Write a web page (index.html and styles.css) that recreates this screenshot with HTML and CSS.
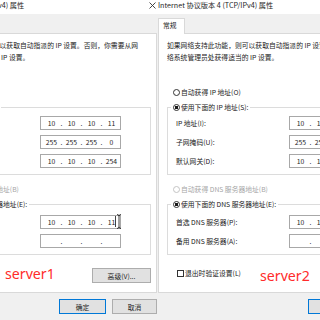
FILE: index.html
```html
<!DOCTYPE html>
<html lang="zh-CN">
<head>
<meta charset="utf-8">
<title>TCP/IPv4 属性</title>
<link rel="stylesheet" href="styles.css">
</head>
<body>
<div class="screen">
  <div class="pane pane-left">
    <div class="dialog dialog-left">
      <div class="titlebar"><span class="title">Internet 协议版本 4 (TCP/IPv4) 属性</span><svg class="close" width="7" height="7" viewBox="0 0 7 7"><path d="M0.5 0.5L6.5 6.5M6.5 0.5L0.5 6.5" stroke="#333" stroke-width="0.9" fill="none"/></svg></div>
      <div class="tabstrip"><div class="tab">常规</div></div>
      <div class="page">
        <p class="desc">如果网络支持此功能，则可以获取自动指派的 IP 设置。否则，你需要从网<br>络系统管理员处获得适当的 IP 设置。</p>
        <div class="option first"><span class="radio"></span>自动获得 IP 地址(O)</div>
        <fieldset class="group group-ip">
          <legend class="option"><span class="radio checked"></span>使用下面的 IP 地址(S):</legend>
          <div class="rows">
            <div class="row"><span class="label">IP 地址(I):</span><div class="ip"><span class="seg">10</span><span class="dot">.</span><span class="seg">10</span><span class="dot">.</span><span class="seg">10</span><span class="dot">.</span><span class="seg">11</span></div></div>
            <div class="row"><span class="label">子网掩码(U):</span><div class="ip"><span class="seg">255</span><span class="dot">.</span><span class="seg">255</span><span class="dot">.</span><span class="seg">255</span><span class="dot">.</span><span class="seg">0</span></div></div>
            <div class="row"><span class="label">默认网关(D):</span><div class="ip"><span class="seg">10</span><span class="dot">.</span><span class="seg">10</span><span class="dot">.</span><span class="seg">10</span><span class="dot">.</span><span class="seg">254</span></div></div>
          </div>
        </fieldset>
        <div class="option disabled"><span class="radio"></span>自动获得 DNS 服务器地址(B)</div>
        <fieldset class="group group-dns">
          <legend class="option"><span class="radio checked"></span>使用下面的 DNS 服务器地址(E):</legend>
          <div class="rows">
            <div class="row"><span class="label">首选 DNS 服务器(P):</span><div class="ip"><span class="seg">10</span><span class="dot">.</span><span class="seg">10</span><span class="dot">.</span><span class="seg">10</span><span class="dot">.</span><span class="seg">11</span></div></div>
            <div class="row"><span class="label">备用 DNS 服务器(A):</span><div class="ip"><span class="seg"></span><span class="dot">.</span><span class="seg"></span><span class="dot">.</span><span class="seg"></span><span class="dot">.</span><span class="seg"></span></div></div>
          </div>
        </fieldset>
        <div class="bottom-row"><div class="check"><span class="box"></span>退出时验证设置(L)</div><button class="btn adv">高级(V)...</button></div>
      </div>
      <div class="footer"><button class="btn ok">确定</button><button class="btn cancel">取消</button></div>
    </div>
    <svg class="ibeam" width="7" height="17" viewBox="0 0 7 17"><path d="M0.5 3V14" stroke="#111" stroke-width="0.8" fill="none"/><path d="M2 1.5Q4 1.5 4 3.2V13.8Q4 15.5 2 15.5M6 1.5Q4 1.5 4 3.2M6 15.5Q4 15.5 4 13.8" stroke="#111" stroke-width="0.8" fill="none"/></svg>
    <div class="annot annot-1">server1</div>
  </div>
  <div class="pane pane-right">
    <div class="dialog">
      <div class="titlebar"><span class="title">Internet 协议版本 4 (TCP/IPv4) 属性</span><svg class="close" width="7" height="7" viewBox="0 0 7 7"><path d="M0.5 0.5L6.5 6.5M6.5 0.5L0.5 6.5" stroke="#333" stroke-width="0.9" fill="none"/></svg></div>
      <div class="tabstrip"><div class="tab">常规</div></div>
      <div class="page">
        <p class="desc">如果网络支持此功能，则可以获取自动指派的 IP 设置。否则，你需要从网<br>络系统管理员处获得适当的 IP 设置。</p>
        <div class="option first"><span class="radio"></span>自动获得 IP 地址(O)</div>
        <fieldset class="group group-ip">
          <legend class="option"><span class="radio checked"></span>使用下面的 IP 地址(S):</legend>
          <div class="rows">
            <div class="row"><span class="label">IP 地址(I):</span><div class="ip"><span class="seg">10</span><span class="dot">.</span><span class="seg">10</span><span class="dot">.</span><span class="seg">10</span><span class="dot">.</span><span class="seg">11</span></div></div>
            <div class="row"><span class="label">子网掩码(U):</span><div class="ip"><span class="seg">255</span><span class="dot">.</span><span class="seg">255</span><span class="dot">.</span><span class="seg">255</span><span class="dot">.</span><span class="seg">0</span></div></div>
            <div class="row"><span class="label">默认网关(D):</span><div class="ip"><span class="seg">10</span><span class="dot">.</span><span class="seg">10</span><span class="dot">.</span><span class="seg">10</span><span class="dot">.</span><span class="seg">254</span></div></div>
          </div>
        </fieldset>
        <div class="option disabled"><span class="radio"></span>自动获得 DNS 服务器地址(B)</div>
        <fieldset class="group group-dns">
          <legend class="option"><span class="radio checked"></span>使用下面的 DNS 服务器地址(E):</legend>
          <div class="rows">
            <div class="row"><span class="label">首选 DNS 服务器(P):</span><div class="ip"><span class="seg">10</span><span class="dot">.</span><span class="seg">10</span><span class="dot">.</span><span class="seg">10</span><span class="dot">.</span><span class="seg">11</span></div></div>
            <div class="row"><span class="label">备用 DNS 服务器(A):</span><div class="ip"><span class="seg"></span><span class="dot">.</span><span class="seg"></span><span class="dot">.</span><span class="seg"></span><span class="dot">.</span><span class="seg"></span></div></div>
          </div>
        </fieldset>
        <div class="bottom-row"><div class="check"><span class="box"></span>退出时验证设置(L)</div><button class="btn adv">高级(V)...</button></div>
      </div>
      <div class="footer"><button class="btn ok">确定</button><button class="btn cancel">取消</button></div>
    </div>
    <div class="annot annot-2">server2</div>
  </div>
</div>
</body>
</html>
```

FILE: styles.css
```css
* { box-sizing: border-box; }
html, body { margin: 0; padding: 0; background: #ffffff; }
body {
  width: 320px;
  height: 320px;
  overflow: hidden;
  font-family: "Noto Sans CJK SC", "Noto Sans", sans-serif;
  font-size: 6.8px;
  line-height: 12px;
  color: #222;
}
.screen { display: flex; width: 320px; height: 320px; }
.pane { position: relative; overflow: hidden; height: 320px; flex-shrink: 0; }
.pane-left { width: 157px; }
.pane-right { width: 163px; }

.dialog {
  width: 257px;
  height: 320px;
  display: flex;
  flex-direction: column;
  background: #f0f0f0;
  flex-shrink: 0;
}
.dialog-left { margin-left: -92px; }

.titlebar {
  height: 14px;
  background: #fff;
  display: flex;
  justify-content: space-between;
  align-items: flex-start;
  padding: 0 9px 0 1px;
  line-height: 11px;
  white-space: nowrap;
  color: #1e1e1e;
}
.title { font-size: 7.2px; }
.close { margin-top: 2px; display: block; }

.tabstrip {
  height: 19px;
  padding-top: 4px;
  display: flex;
  align-items: flex-start;
}
.tab {
  position: relative;
  z-index: 1;
  margin-left: 1px;
  width: 27px;
  height: 16px;
  background: #fff;
  border: 1px solid #d9d9d9;
  border-bottom: none;
  padding-left: 4px;
  line-height: 12px;
}

.page {
  margin: 0 8px 0 1px;
  height: 260px;
  background: #fff;
  border: 1px solid #d9d9d9;
  padding: 0 5px 0 8px;
  display: flex;
  flex-direction: column;
  white-space: nowrap;
}
.desc { margin: 5px 0 0; }

.option {
  display: flex;
  align-items: center;
  height: 12px;
}
.option.first { margin: 23px 0 0 6px; }
.option.disabled { margin: 8px 0 0 6px; color: #a6a6a6; }
.radio {
  width: 7px;
  height: 7px;
  border: 1px solid #333;
  border-radius: 50%;
  margin-right: 1px;
  background: #fff;
  flex-shrink: 0;
}
.radio.checked { background: radial-gradient(circle, #1a1a1a 0 1.5px, #fff 2px); }
.option.disabled .radio { border-color: #c4c4c4; }

.group {
  margin: 3px 0 0;
  padding: 0;
  border: 1px solid #dcdcdc;
  min-width: 0;
}
.group legend {
  margin-left: 3px;
  padding: 0 2px;
}
.rows {
  display: flex;
  flex-direction: column;
  gap: 5px;
  padding: 3px 0 6px 8px;
}
.group-dns .rows { padding-top: 5px; }
.row { display: flex; align-items: center; height: 14px; }
.label { width: 113px; flex-shrink: 0; }
.ip {
  width: 81px;
  height: 14px;
  border: 1px solid #a8a8a8;
  display: flex;
  align-items: center;
  padding-left: 2px;
  line-height: 12px;
  color: #1e1e1e;
}
.seg { width: 17px; text-align: center; }
.dot { width: 3px; text-align: center; }

.bottom-row {
  margin-top: 13px;
  display: flex;
  justify-content: space-between;
  align-items: flex-start;
}
.check {
  display: flex;
  align-items: center;
  height: 12px;
  margin: -1px 0 0 10px;
}
.box {
  width: 7px;
  height: 7px;
  border: 1px solid #333;
  background: #fff;
  margin-right: 1px;
}

.btn {
  font: inherit;
  font-size: 6.8px;
  line-height: 12px;
  color: #1e1e1e;
  height: 15px;
  padding: 0;
  background: #e1e1e1;
  border: 1px solid #adadad;
  border-radius: 0;
}
.adv { width: 59px; }
.footer {
  display: flex;
  justify-content: flex-end;
  gap: 6px;
  padding: 6px 8px 0 0;
}
.ok { width: 47px; border-color: #0078d7; }
.cancel { width: 45px; }

.ibeam { position: absolute; left: 115px; top: 213px; }

.annot {
  position: absolute;
  font-family: "Noto Sans", "Liberation Sans", sans-serif;
  font-size: 14.2px;
  line-height: 14px;
  color: #ff2b2b;
  white-space: nowrap;
}
.annot-1 { left: 5px; top: 267px; }
.annot-2 { left: 103px; top: 269px; }
```
